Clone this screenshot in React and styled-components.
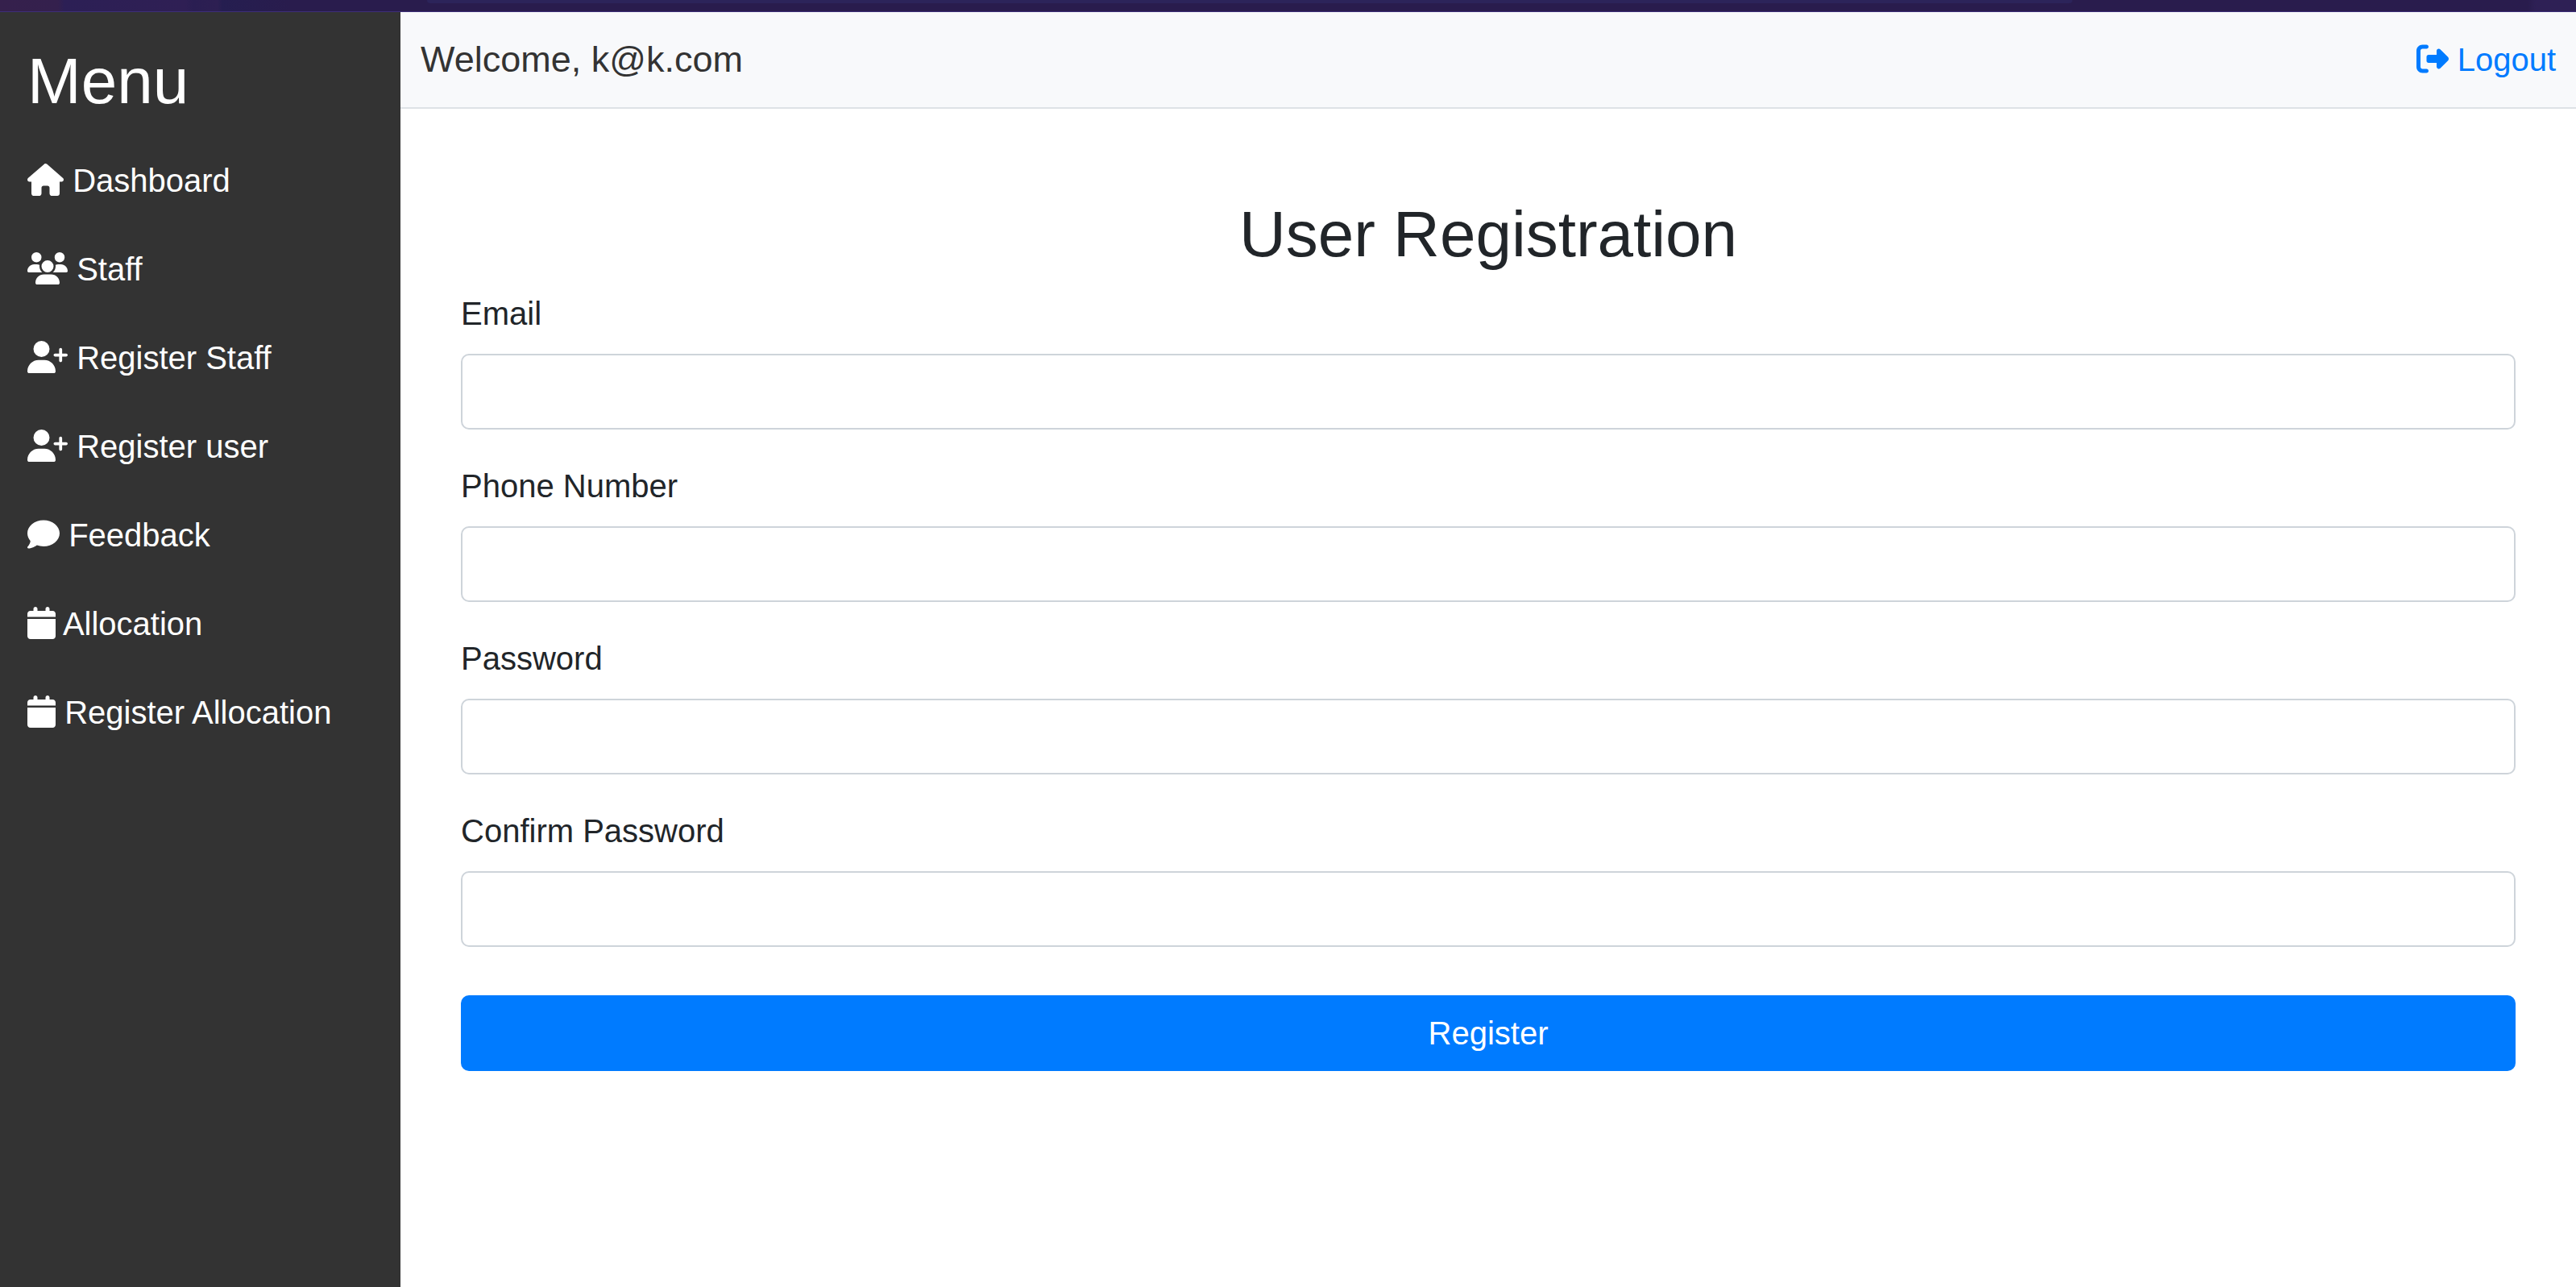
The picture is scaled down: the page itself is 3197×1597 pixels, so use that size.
import React from "react";
import styled, { createGlobalStyle } from "styled-components";
import {
  FaHouse,
  FaUsers,
  FaUserPlus,
  FaComment,
  FaCalendar,
  FaRightFromBracket,
} from "react-icons/fa6";

const GlobalStyle = createGlobalStyle`
  *, *::before, *::after { box-sizing: border-box; }
  body {
    margin: 0;
    background: #fff;
    color: #212529;
    font-family: "Liberation Sans", Arial, sans-serif;
    font-size: 40px;
    line-height: 60px;
    font-variant-ligatures: none;
  }
`;

const Page = styled.div`
  display: flex;
  flex-direction: column;
  min-height: 100vh;
`;

const TopStrip = styled.div`
  flex: none;
  height: 15px;
  padding: 0 625px 0 530px;
  border-bottom: 1px solid #3d2f78;
  background: linear-gradient(
    to right,
    #35204c 0,
    #34204d 72px,
    #2c1f55 80px,
    #2f1f54 230px,
    #2a1e52 240px,
    #2d1f52 270px,
    #251e50 276px,
    #291c4d 360px,
    #291c4d calc(100% - 60px),
    #2e2055 calc(100% - 50px)
  );
`;

const StripTab = styled.div`
  height: 4px;
  border-radius: 0 0 8px 8px;
  background: #2c245a;
`;

const Body = styled.div`
  display: flex;
  flex: 1;
`;

const Sidebar = styled.nav`
  flex: none;
  width: 497px;
  padding: 38px 34px;
  background: #333;
  color: #fff;
`;

const Title = styled.h2`
  margin: 0 0 20px;
  font-size: 80px;
  line-height: 96px;
  font-weight: 400;
  text-align: ${(p) => p.$align || "left"};
`;

const MenuList = styled.ul`
  margin: 0;
  padding: 0;
  list-style: none;
`;

const MenuLink = styled.a`
  display: block;
  padding: 25px 0;
  color: #fff;
  text-decoration: none;
  white-space: nowrap;
`;

const Icon = styled.span`
  svg {
    width: ${(p) => p.$width}px;
    height: 40px;
    vertical-align: -5px;
  }
`;

const Content = styled.div`
  flex: 1;
  min-width: 0;
`;

const Header = styled.header`
  display: flex;
  align-items: center;
  justify-content: space-between;
  height: 120px;
  padding: 0 25px;
  background: #f8f9fb;
  border-bottom: 2px solid #dee2e6;
`;

const Welcome = styled.span`
  color: #333;
  font-size: 45px;
  line-height: 66px;
`;

const LogoutLink = styled.a`
  color: #007bff;
  text-decoration: none;
`;

const Main = styled.main`
  padding: 108px 75px;
`;

const Field = styled.div`
  display: flex;
  flex-direction: column;
  gap: 20px;
  margin-bottom: 40px;
`;

const Input = styled.input`
  width: 100%;
  height: 94px;
  padding: 15px 30px;
  border: 2px solid #ced4da;
  border-radius: 10px;
  background: #fff;
  color: #495057;
  font: inherit;
`;

const SubmitButton = styled.button`
  display: block;
  width: 100%;
  height: 94px;
  margin-top: 60px;
  padding: 0;
  border: 0;
  border-radius: 10px;
  background: #007bff;
  color: #fff;
  font: inherit;
  cursor: pointer;
`;

const menu = [
  { label: "Dashboard", icon: FaHouse, width: 45 },
  { label: "Staff", icon: FaUsers, width: 50 },
  { label: "Register Staff", icon: FaUserPlus, width: 50 },
  { label: "Register user", icon: FaUserPlus, width: 50 },
  { label: "Feedback", icon: FaComment, width: 40 },
  { label: "Allocation", icon: FaCalendar, width: 35 },
  { label: "Register Allocation", icon: FaCalendar, width: 35 },
];

const fields = [
  { id: "email", label: "Email", type: "email" },
  { id: "phone", label: "Phone Number", type: "tel" },
  { id: "password", label: "Password", type: "password" },
  { id: "confirm", label: "Confirm Password", type: "password" },
];

export default function App() {
  return (
    <Page>
      <GlobalStyle />
      <TopStrip>
        <StripTab />
      </TopStrip>
      <Body>
        <Sidebar>
          <Title>Menu</Title>
          <MenuList>
            {menu.map(({ label, icon: Glyph, width }) => (
              <li key={label}>
                <MenuLink href="#">
                  <Icon $width={width}>
                    <Glyph aria-hidden="true" />
                  </Icon>{" "}
                  {label}
                </MenuLink>
              </li>
            ))}
          </MenuList>
        </Sidebar>
        <Content>
          <Header>
            <Welcome>Welcome, k@k.com</Welcome>
            <LogoutLink href="#">
              <Icon $width={40}>
                <FaRightFromBracket aria-hidden="true" />
              </Icon>{" "}
              Logout
            </LogoutLink>
          </Header>
          <Main>
            <Title $align="center">User Registration</Title>
            <form onSubmit={(e) => e.preventDefault()}>
              {fields.map(({ id, label, type }) => (
                <Field key={id}>
                  <label htmlFor={id}>{label}</label>
                  <Input id={id} type={type} />
                </Field>
              ))}
              <SubmitButton type="submit">Register</SubmitButton>
            </form>
          </Main>
        </Content>
      </Body>
    </Page>
  );
}
